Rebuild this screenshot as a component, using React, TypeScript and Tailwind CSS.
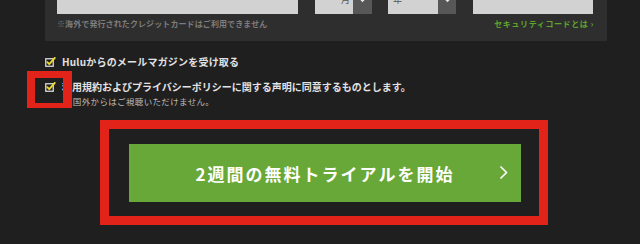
import React from "react";

const CheckIcon = () => (
  <svg width="11" height="10" viewBox="0 0 11 10" className="shrink-0">
    <rect x="0.75" y="1.75" width="7.5" height="7.5" fill="none" stroke="#d8d8d8" strokeWidth="1.3" />
    <path d="M2.3 5.2 L4.3 7.2 L9.8 0.9" fill="none" stroke="#f0dc2a" strokeWidth="1.8" strokeLinecap="round" strokeLinejoin="round" />
  </svg>
);

const SelectArrow = () => (
  <svg width="9" height="7" viewBox="0 0 9 7">
    <path d="M1 1.5 L4.5 5 L8 1.5" fill="none" stroke="#e6e6e6" strokeWidth="1.6" />
  </svg>
);

export default function App() {
  return (
    <div className="relative w-[640px] h-[244px] overflow-hidden bg-[#1f1f1f] font-['Noto_Sans_CJK_JP',sans-serif]">
      {/* form panel (top cut off) */}
      <div className="ml-[45px] -mt-[16px] w-[562px] h-[57px] bg-[#2e2e2e] px-[12px] flex flex-col">
        <div className="flex h-[30px] items-stretch">
          <div className="w-[241px] bg-[#d2d2d2]" />
          <div className="ml-[17px] flex">
            <div className="w-[38px] bg-[#d2d2d2] flex items-center pl-[26px] text-[9px] text-[#555] leading-none">月</div>
            <div className="w-[19px] bg-[#575757] flex items-center justify-center"><SelectArrow /></div>
          </div>
          <div className="ml-[16px] flex">
            <div className="w-[50px] bg-[#d2d2d2] flex items-center pl-[5px] text-[9px] text-[#555] leading-none">年</div>
            <div className="w-[18px] bg-[#575757] flex items-center justify-center"><SelectArrow /></div>
          </div>
          <div className="ml-[17px] w-[120px] bg-[#d2d2d2]" />
        </div>
        <div className="mt-[5px] flex justify-between items-center h-[10px] text-[8px] font-bold leading-none">
          <span className="text-[#7c7c7c] tracking-[0.1px]">※海外で発行されたクレジットカードはご利用できません</span>
          <span className="text-[#5da52c] tracking-[0.6px] mr-[1px]">セキュリティコードとは&nbsp;›</span>
        </div>
      </div>

      {/* checkboxes */}
      <div className="ml-[45px] mt-[15px] flex flex-col text-[#e2e2e2]">
        <div className="flex items-center h-[12px] gap-[6px]">
          <CheckIcon />
          <span className="text-[10px] font-bold leading-none tracking-[0.2px]">Huluからのメールマガジンを受け取る</span>
        </div>
        <div className="mt-[13px] flex items-center h-[12px] gap-[6px]">
          <CheckIcon />
          <span className="text-[10px] font-bold leading-none tracking-[0px]">利用規約およびプライバシーポリシーに関する声明に同意するものとします。</span>
        </div>
        <div className="mt-[3px] ml-[19px] h-[11px] flex items-center text-[8.5px] text-[#bcbcbc] leading-none tracking-[0.35px]">
          ※国外からはご視聴いただけません。
        </div>
      </div>

      {/* annotation around checkbox */}
      <div className="absolute left-[27px] top-[71px] w-[45px] h-[37px] border-[#e2231a] border-l-[8px] border-t-[7px] border-r-[9px] border-b-[5px]" />

      {/* CTA with annotation frame */}
      <div className="ml-[100px] mt-[13px] w-[448px] h-[105px] border-[9px] border-[#e2231a] pl-[20px] pr-[18px] py-[15px]">
        <div className="relative h-[58px] bg-[#68a838] flex items-center justify-center">
          <span className="text-[17px] font-bold text-white tracking-[2px] leading-none">2週間の無料トライアルを開始</span>
          <svg className="absolute right-[13px] top-[21px]" width="9" height="15" viewBox="0 0 9 15">
            <path d="M1.5 1.5 L7.5 7.5 L1.5 13.5" fill="none" stroke="#ffffff" strokeWidth="1.6" />
          </svg>
        </div>
      </div>
    </div>
  );
}
